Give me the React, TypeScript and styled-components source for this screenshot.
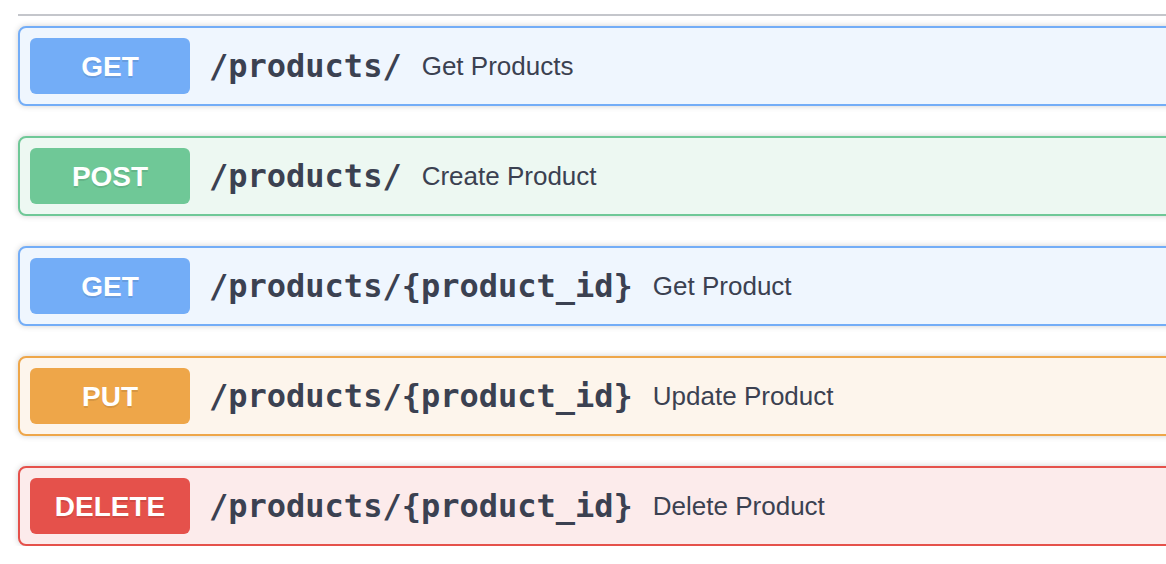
import React from 'react';
import styled, { createGlobalStyle } from 'styled-components';

const GlobalStyle = createGlobalStyle`
  html, body {
    margin: 0;
    padding: 0;
    background: #ffffff;
    overflow: hidden;
  }
  body {
    font-family: "Liberation Sans", Arial, sans-serif;
    color: #3b4151;
  }
`;

type Method = 'get' | 'post' | 'put' | 'delete';

const palette: Record<Method, { main: string; bg: string }> = {
  get: { main: '#73adf7', bg: '#eff6fe' },
  post: { main: '#6fc897', bg: '#edf8f2' },
  put: { main: '#eea649', bg: '#fdf5ec' },
  delete: { main: '#e5514b', bg: '#fcebeb' },
};

const Section = styled.section`
  width: 1200px;
  padding: 14px 0 0 18px;
`;

const TagDivider = styled.div`
  height: 2px;
  background: #c4c6cb;
  margin-bottom: 10px;
`;

const Operations = styled.div`
  display: flex;
  flex-direction: column;
  gap: 30px;
`;

const OpBlock = styled.div<{ $method: Method }>`
  display: flex;
  align-items: center;
  height: 80px;
  box-sizing: border-box;
  padding: 10px;
  border: 2px solid ${(p) => palette[p.$method].main};
  border-radius: 8px;
  background: ${(p) => palette[p.$method].bg};
  box-shadow: 0 0 6px rgba(0, 0, 0, 0.19);
`;

const MethodBadge = styled.span<{ $method: Method }>`
  display: flex;
  align-items: center;
  justify-content: center;
  flex: 0 0 160px;
  height: 56px;
  padding-top: 1px;
  box-sizing: border-box;
  border-radius: 6px;
  background: ${(p) => palette[p.$method].main};
  color: #ffffff;
  font-family: "Liberation Sans", Arial, sans-serif;
  font-weight: 700;
  font-size: 28px;
  text-shadow: 0 2px 0 rgba(0, 0, 0, 0.1);
`;

const Path = styled.span`
  padding: 0 20px 0 19px;
  font-family: "DejaVu Sans Mono", monospace;
  font-weight: 700;
  font-size: 32px;
  color: #3b4151;
  white-space: nowrap;
`;

const Description = styled.span`
  font-family: "Liberation Sans", Arial, sans-serif;
  font-size: 26px;
  color: #3b4151;
  white-space: nowrap;
`;

const ops: { method: Method; path: string; summary: string }[] = [
  { method: 'get', path: '/products/', summary: 'Get Products' },
  { method: 'post', path: '/products/', summary: 'Create Product' },
  { method: 'get', path: '/products/{product_id}', summary: 'Get Product' },
  { method: 'put', path: '/products/{product_id}', summary: 'Update Product' },
  { method: 'delete', path: '/products/{product_id}', summary: 'Delete Product' },
];

export default function App() {
  return (
    <>
      <GlobalStyle />
      <Section>
        <TagDivider />
        <Operations>
          {ops.map((op, i) => (
            <OpBlock key={i} $method={op.method}>
              <MethodBadge $method={op.method}>{op.method.toUpperCase()}</MethodBadge>
              <Path>{op.path}</Path>
              <Description>{op.summary}</Description>
            </OpBlock>
          ))}
        </Operations>
      </Section>
    </>
  );
}
